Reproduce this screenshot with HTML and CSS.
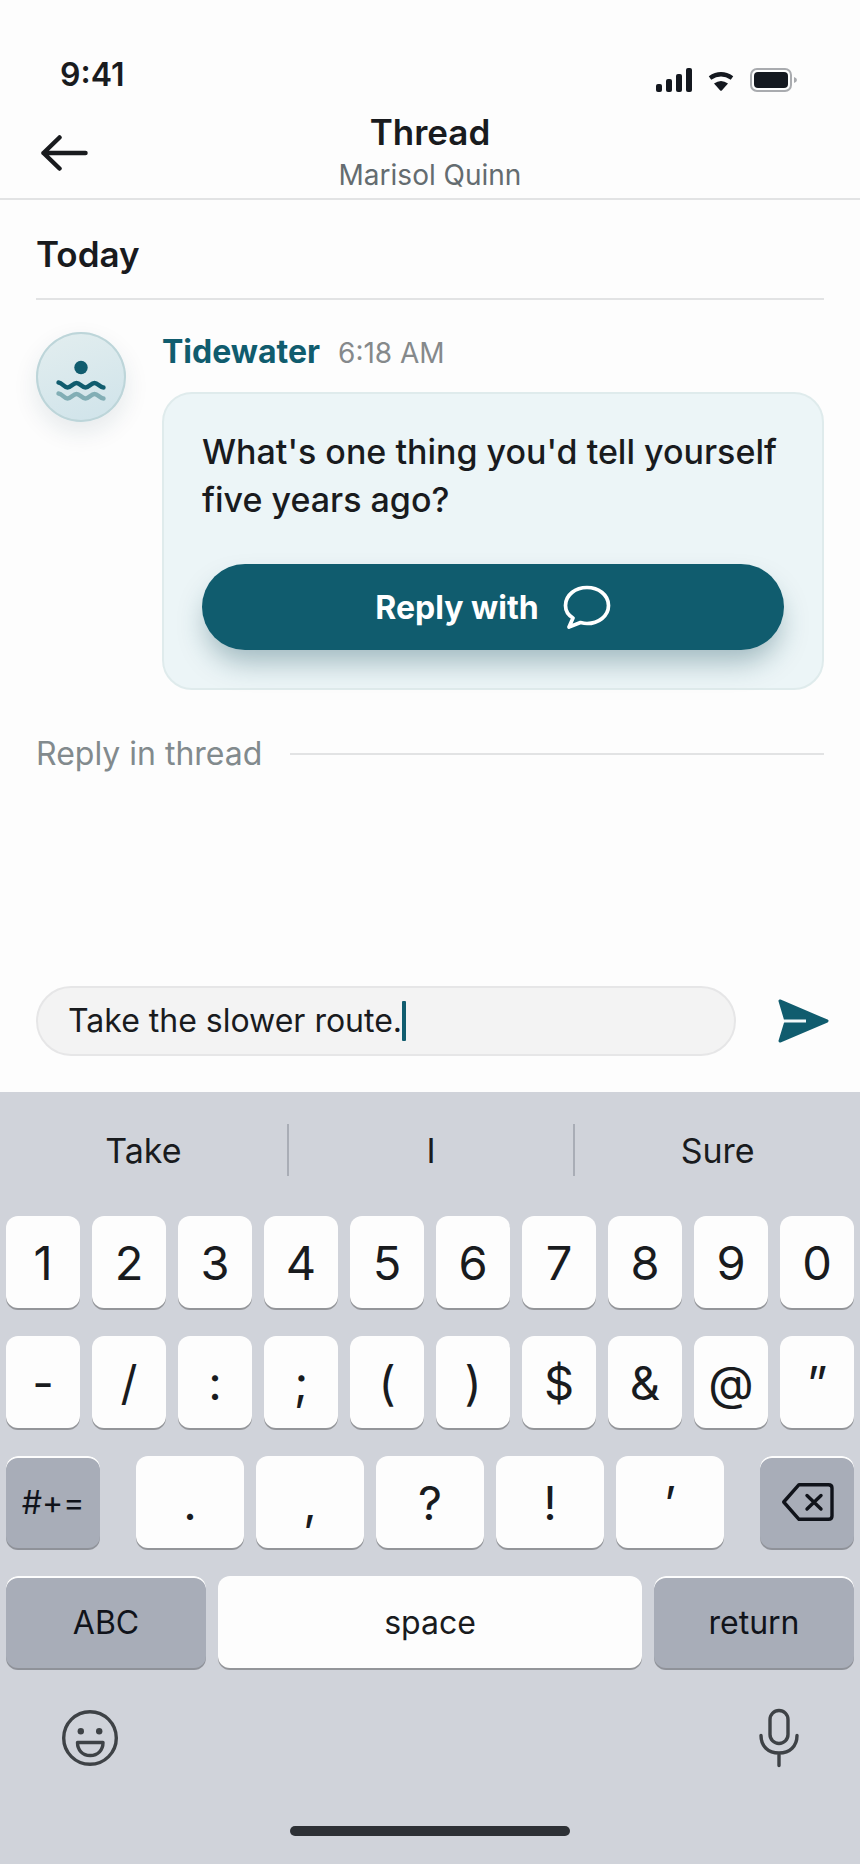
FILE: index.html
```html
<!DOCTYPE html>
<html lang="en">
<head>
    <meta charset="utf-8">
    <meta name="viewport" content="width=device-width, initial-scale=1">
    <title>Thread</title>
    <link rel="stylesheet" href="styles.css">
</head>
<body>
<div class="status-bar">
    <span class="time">9:41</span>
    <div class="status-icons">
        <svg width="36" height="24" viewBox="0 0 36 24">
            <rect x="0" y="16" width="6" height="8" rx="2"/>
            <rect x="10" y="11" width="6" height="13" rx="2"/>
            <rect x="20" y="6" width="6" height="18" rx="2"/>
            <rect x="30" y="0" width="6" height="24" rx="2"/>
        </svg>
        <svg width="26" height="24" viewBox="0 0 26 24">
            <path d="M2 10Q13 2.500 24 10" fill="none" stroke="#14181f" stroke-width="4.400"/>
            <path d="M6 15.500Q13 10.500 20 15.500L14 22.300Q13 23.300 12 22.300Z"/>
        </svg>
        <svg width="47" height="24" viewBox="0 0 47 24">
            <rect x="1" y="1" width="40" height="22" rx="6" fill="none" stroke="#a9abaf" stroke-width="2"/>
            <rect x="4" y="4" width="34" height="16" rx="4"/>
            <path d="M44 9Q47 10 47 12Q47 14 44 15Z" fill="#a9abaf"/>
        </svg>
    </div>
</div>

<header class="header">
    <button class="icon-button" aria-label="Back">
        <svg width="48" height="36" viewBox="0 0 48 36" fill="none" stroke="#191b1e" stroke-width="4.500" stroke-linecap="round" stroke-linejoin="round">
            <path d="M19.500 2.500L3.500 18L19.500 33.500M3.500 18H45.500"/>
        </svg>
    </button>
    <div class="header-text">
        <h1>Thread</h1>
        <p>Marisol Quinn</p>
    </div>
</header>

<main class="thread">
    <h2 class="day">Today</h2>
    <article class="message">
        <div class="avatar">
            <svg viewBox="0 0 90 90" fill="none" stroke="#105c6e" stroke-width="4.400" stroke-linecap="round">
                <circle cx="45" cy="35.500" r="6.700" fill="#105c6e" stroke="none"/>
                <path d="M22.500 50.500C26.500 51 28 55.500 31.500 55.500S37 51 40.500 51S46 55.500 49.500 55.500S55 51 58.500 51S64 55.500 67.500 55.500"/>
                <path d="M22.500 61.500C26.500 62 28 66.500 31.500 66.500S37 62 40.500 62S46 66.500 49.500 66.500S55 62 58.500 62S64 66.500 67.500 66.500" stroke="#82aeb5"/>
            </svg>
        </div>
        <div class="message-body">
            <div class="message-head">
                <span class="author">Tidewater</span>
                <time>6:18 AM</time>
            </div>
            <div class="bubble">
                <p>What's one thing you'd tell yourself five years ago?</p>
                <button class="reply-button">
                    Reply with
                    <svg width="48" height="44" viewBox="0 0 48 44" fill="none" stroke="#fff" stroke-width="3.700" stroke-linejoin="round">
                        <path d="M24 2.500C35.500 2.500 45.500 10 45.500 20.500S35.500 38.500 24 38.500C21.500 38.500 19.500 38 17.500 37.500L6 42L10 33C5 30 2.500 26 2.500 20.500C2.500 10 12.500 2.500 24 2.500Z"/>
                    </svg>
                </button>
            </div>
        </div>
    </article>
    <div class="thread-divider">Reply in thread</div>
</main>

<form class="composer">
    <label class="field">
        <input type="text" value="Take the slower route." aria-label="Reply">
        <span class="caret"></span>
    </label>
    <button type="button" class="icon-button" aria-label="Send">
        <svg width="52" height="44" viewBox="0 0 52 44">
            <path d="M2 2L49 22L2 42L7.500 24H28V20.500H7.500Z" fill="#105c6e" stroke="#105c6e" stroke-width="3" stroke-linejoin="round"/>
            <path d="M6 22H28" stroke="#f2f9fa" stroke-width="3"/>
        </svg>
    </button>
</form>

<section class="keyboard" aria-label="Keyboard">
    <div class="suggestions">
        <button>Take</button>
        <button>I</button>
        <button>Sure</button>
    </div>
    <div class="keys">
        <div class="key-row">
            <button class="key">1</button>
            <button class="key">2</button>
            <button class="key">3</button>
            <button class="key">4</button>
            <button class="key">5</button>
            <button class="key">6</button>
            <button class="key">7</button>
            <button class="key">8</button>
            <button class="key">9</button>
            <button class="key">0</button>
        </div>
        <div class="key-row">
            <button class="key">-</button>
            <button class="key">/</button>
            <button class="key">:</button>
            <button class="key">;</button>
            <button class="key">(</button>
            <button class="key">)</button>
            <button class="key">$</button>
            <button class="key">&amp;</button>
            <button class="key">@</button>
            <button class="key">”</button>
        </div>
        <div class="key-row punctuation">
            <button class="key dark">#+=</button>
            <button class="key">.</button>
            <button class="key">,</button>
            <button class="key">?</button>
            <button class="key">!</button>
            <button class="key">’</button>
            <button class="key dark" aria-label="Delete">
                <svg width="54" height="38" viewBox="-2 0 54 38" fill="none" stroke="#10131a" stroke-width="3.400" stroke-linecap="round" stroke-linejoin="round">
                    <path d="M17 1.700H46.500Q50 1.700 50 5V33Q50 36.300 46.500 36.300H17L1.700 19Z"/>
                    <path d="M25 12.500L39 26M39 12.500L25 26"/>
                </svg>
            </button>
        </div>
        <div class="key-row bottom">
            <button class="key dark">ABC</button>
            <button class="key word">space</button>
            <button class="key dark">return</button>
        </div>
    </div>
    <div class="tools">
        <button class="icon-button" aria-label="Emoji">
            <svg width="56" height="56" viewBox="0 0 56 56" fill="none" stroke="#3e4246" stroke-width="3.400" stroke-linejoin="round">
                <circle cx="28" cy="28" r="26.300"/>
                <circle cx="18.800" cy="21.300" r="3.200" fill="#3e4246" stroke="none"/>
                <circle cx="37.200" cy="21.300" r="3.200" fill="#3e4246" stroke="none"/>
                <path d="M15.500 32.500H41C41 40 36 45.500 28.200 45.500S15.500 40 15.500 32.500Z"/>
            </svg>
        </button>
        <button class="icon-button" aria-label="Dictate">
            <svg width="40" height="60" viewBox="0 0 40 60" fill="none" stroke="#3e4246" stroke-width="3.400" stroke-linecap="round">
                <rect x="11" y="2.500" width="18" height="33" rx="9"/>
                <path d="M2 27.500C2 38 9 45 20 45S38 38 38 27.500M20 45V57.500"/>
            </svg>
        </button>
    </div>
    <div class="home-indicator"></div>
</section>
</body>
</html>
```
FILE: styles.css
```css
:root {
    --accent: #105c6e;
    --ink: #191b1e;
    --line: #e2e3e4;
    --keyboard: #d0d3da;
}

* {
    box-sizing: border-box;
}

body {
    margin: 0;
    min-height: 100vh;
    display: flex;
    flex-direction: column;
    background: #fdfdfd;
    color: var(--ink);
    font-family: Inter, "Liberation Sans", sans-serif;
}

h1, h2, p {
    margin: 0;
}

button {
    padding: 0;
    border: 0;
    background: none;
    color: inherit;
    font: inherit;
}

svg {
    display: block;
}

.status-bar {
    height: 110px;
    padding: 50px 63px 0 60px;
    display: flex;
    justify-content: space-between;
    align-items: flex-start;
    font-size: 32px;
    line-height: 50px;
    font-weight: 600;
}

.status-icons {
    padding-top: 18px;
    display: flex;
    gap: 16px;
    fill: #14181f;
}

.header {
    padding: 0 40px 2px;
    display: grid;
    grid-template-columns: 1fr auto 1fr;
    align-items: center;
    border-bottom: 2px solid var(--line);
}

.icon-button {
    justify-self: start;
}

.header-text {
    text-align: center;
}

.header h1 {
    font-size: 35px;
    line-height: 44px;
    font-weight: 600;
}

.header p {
    font-size: 28px;
    line-height: 42px;
    color: #646c70;
}

.thread {
    flex: 1;
    padding: 32px 36px;
}

.day {
    padding-bottom: 22px;
    border-bottom: 2px solid var(--line);
    font-size: 35px;
    line-height: 44px;
    font-weight: 600;
}

.message {
    margin-top: 32px;
    display: flex;
    gap: 36px;
}

.avatar {
    flex: none;
    width: 90px;
    height: 90px;
    border-radius: 50%;
    background: linear-gradient(160deg, #e3eeef, #cfe3ea);
    box-shadow: inset 0 0 0 2px #bdd5d9, 0 10px 24px rgba(16, 60, 75, .1);
}

.message-body {
    flex: 1;
}

.message-head {
    height: 40px;
    display: flex;
    align-items: baseline;
    gap: 18px;
    line-height: 40px;
}

.author {
    font-size: 32px;
    font-weight: 700;
    color: var(--accent);
}

.message-head time {
    font-size: 28px;
    color: #85898b;
}

.bubble {
    margin-top: 20px;
    padding: 34px 38px 38px;
    border: 2px solid #dfebec;
    border-radius: 30px;
    background: #ecf5f7;
}

.bubble p {
    font-size: 34px;
    line-height: 48px;
    font-weight: 500;
}

.reply-button {
    width: 100%;
    height: 86px;
    margin-top: 40px;
    display: flex;
    justify-content: center;
    align-items: center;
    gap: 24px;
    border-radius: 43px;
    background: var(--accent);
    box-shadow: 0 16px 28px -4px rgba(16, 70, 85, .34);
    color: #fff;
    font-size: 32px;
    font-weight: 700;
}

.thread-divider {
    margin-top: 44px;
    display: flex;
    align-items: center;
    gap: 28px;
    font-size: 32px;
    line-height: 40px;
    color: #828a8d;
}

.thread-divider::after {
    content: "";
    flex: 1;
    height: 2px;
    background: var(--line);
}

.composer {
    padding: 0 30px 36px 36px;
    display: flex;
    align-items: center;
    gap: 42px;
}

.field {
    flex: 1;
    height: 70px;
    padding: 0 30px;
    display: flex;
    align-items: center;
    border: 2px solid #e6e6e7;
    border-radius: 35px;
    background: #f3f3f3;
}

.field input {
    field-sizing: content;
    padding: 0;
    border: 0;
    outline: 0;
    background: none;
    color: var(--ink);
    font: inherit;
    font-size: 32px;
    line-height: 40px;
}

.caret {
    width: 4px;
    height: 40px;
    border-radius: 1px;
    background: var(--accent);
}

.keyboard {
    background: var(--keyboard);
}

.suggestions {
    padding: 32px 0 40px;
    display: grid;
    grid-template-columns: repeat(3, 1fr);
}

.suggestions button {
    height: 52px;
    font-size: 34px;
}

.suggestions button + button {
    border-left: 2px solid #a9adb6;
}

.keys {
    padding: 0 6px 2px;
    display: grid;
    gap: 28px;
}

.key-row {
    display: grid;
    grid-template-columns: repeat(10, 1fr);
    gap: 12px;
}

.key-row.punctuation {
    grid-template-columns: 94fr 12px repeat(5, 108fr) 12px 94fr;
}

.punctuation .key:nth-child(2) {
    grid-column: 3;
}

.punctuation .key:last-child {
    grid-column: 9;
}

.key-row.bottom {
    grid-template-columns: 200fr 424fr 200fr;
}

.key {
    height: 92px;
    display: flex;
    justify-content: center;
    align-items: center;
    border-radius: 12px;
    background: #fdfdfd;
    box-shadow: 0 2px 0 #939599;
    font-size: 47px;
}

.key.word, .key.dark {
    font-size: 32px;
}

.key.dark {
    background: #a8adb8;
    box-shadow: inset 0 2px 0 #fdfdfd, 0 2px 0 #8f9299;
    color: #10131a;
}

.tools {
    padding: 38px 61px 0 62px;
    display: flex;
    justify-content: space-between;
    align-items: center;
}

.home-indicator {
    width: 280px;
    height: 10px;
    margin: 58px auto 0;
    border-radius: 5px;
    background: #2d3035;
}

.keyboard::after {
    content: "";
    display: block;
    height: 28px;
}
```
